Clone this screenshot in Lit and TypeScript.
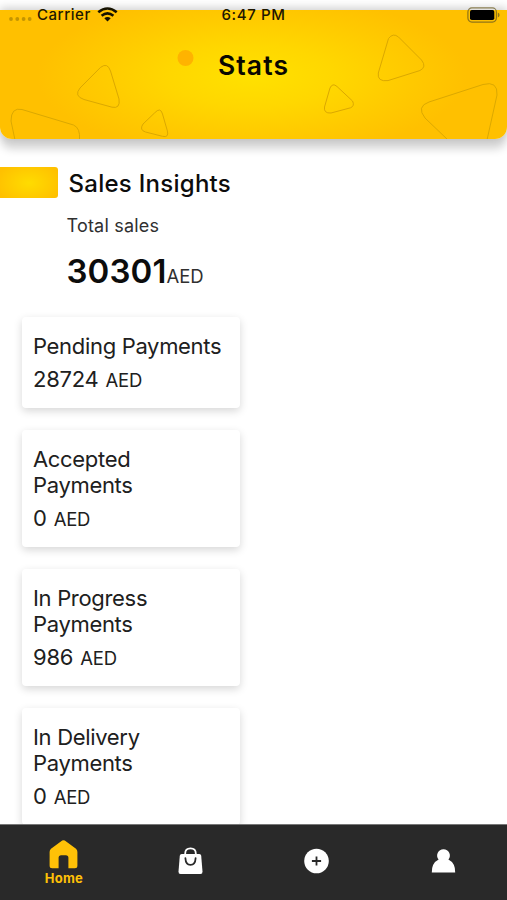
import { LitElement, html, svg, css } from "lit";
import { customElement, property } from "lit/decorators.js";

@customElement("status-bar")
class StatusBar extends LitElement {
  static styles = css`
    :host { display: grid; grid-template-columns: 1fr auto 1fr; height: 29px; padding: 0 7px 0 8px; align-items: center; font-size: 15px; font-weight: 500; line-height: 29px; color: #1c1600; }
    .left { display: flex; align-items: center; }
    .dots { margin-top: 9px; margin-right: 5px; }
    .carrier { letter-spacing: 0.55px; margin-right: 6px; }
    .time { letter-spacing: 0.6px; margin-right: 1px; }
    .battery { justify-self: end; }
    svg { display: block; }
  `;
  render() {
    return html`
      <div class="left">
        <svg class="dots" width="24" height="6" fill="#8a6a00" fill-opacity=".5">
          <circle cx="3" cy="3" r="1.9"/><circle cx="9.3" cy="3" r="1.9"/><circle cx="15.6" cy="3" r="1.9"/><circle cx="21.7" cy="3" r="1.9"/>
        </svg>
        <span class="carrier">Carrier</span>
        <svg width="21" height="15" viewBox="0 0 21 15" fill="none" stroke="#161200" stroke-width="2.6">
          <path d="M1.3 5.2Q10.5-2.2 19.7 5.2"/><path d="M4.6 8.8Q10.5 4 16.4 8.8"/>
          <path d="M7.3 11.3Q10.5 8.5 13.7 11.3L10.5 14.6Z" fill="#161200" stroke="none"/>
        </svg>
      </div>
      <span class="time">6:47 PM</span>
      <svg class="battery" width="33" height="16" viewBox="0 0 33 16">
        <rect x=".9" y=".9" width="28.5" height="14.2" rx="4" fill="none" stroke="#6b5b20" stroke-opacity=".75" stroke-width="1.2"/>
        <rect x="3" y="3" width="24.3" height="10" rx="1.8"/>
        <path d="M30.8 5.5Q32.6 6.2 32.6 8T30.8 10.5Z" fill="#6b5b20" fill-opacity=".75"/>
      </svg>`;
  }
}

@customElement("payment-card")
class PaymentCard extends LitElement {
  @property() label = "";
  @property() amount = "";
  static styles = css`
    :host { display: block; box-sizing: border-box; width: 218px; padding: 16px 11px 12px 11px; border-radius: 4px; background: #fff; box-shadow: 0 3px 8px rgba(0,0,0,.16); color: #202020; }
    .label { font-size: 22px; line-height: 26px; letter-spacing: -.32px; }
    .amount { display: flex; align-items: baseline; gap: 7px; margin-top: 3px; height: 34px; line-height: 34px; font-size: 22px; letter-spacing: -.25px; }
    .unit { font-size: 18.5px; letter-spacing: -.2px; }
  `;
  render() {
    return html`<div class="label">${this.label}</div>
      <div class="amount"><span>${this.amount}</span><span class="unit">AED</span></div>`;
  }
}

const shapes = [
  "M100.5 67.4Q107.5 62 110.5 71L119 99Q120.5 109 112 107.2L84 99.5Q73.5 96 80 88Z",
  "M154.5 113Q160.5 106.5 162.5 114L167.4 131Q169 138 162.5 136.3L145.5 132Q139 130 143 124Z",
  "M15 140L11 121Q11 107 22 109.5L73.5 125Q80.5 128 79.5 140",
  "M388.5 38.5Q393 32.5 398.5 37L421.5 60Q427 67 420 70.5L388 80.6Q377 82 378.3 73Z",
  "M330 88Q332.5 82.5 337 86.5L352.5 101Q355 106 350.5 107.8L331 113Q323.5 113.5 324.5 107Z",
  "M448 140L425 118Q416 106.5 429 102L483 84.5Q498 80.5 497 95L487 140",
];

const icons = [
  svg`<path d="M14.2.6Q15.5-.1 16.8.6L28 8.7Q29.4 10 29.4 12V25.7Q29.4 28.2 26.8 28.2H20.4V17.7Q20.4 15.2 17.9 15.2H13.1Q10.6 15.2 10.6 17.7V28.2H4.2Q1.6 28.2 1.6 25.7V12Q1.6 10 3 8.7Z"/>`,
  svg`<path d="M10.2 7.8V6.5Q10.2 1.4 15.5 1.4T20.8 6.5V7.8" fill="none" stroke="currentColor" stroke-width="1.8"/><path d="M6.7 7H24.3Q26 7 26.2 8.7L27.5 24.5Q27.6 27 25.5 27H5.5Q3.4 27 3.5 24.5L4.8 8.7Q5 7 6.7 7Z"/><path d="M10.4 11.2Q10.7 17.8 15.5 17.8T20.6 11.2" fill="none" stroke="#292929" stroke-width="1.8" stroke-linecap="round"/>`,
  svg`<circle cx="15.5" cy="14" r="12.3"/><path d="M10.9 14H20.1M15.5 9.4V18.6" stroke="#292929" stroke-width="1.8"/>`,
  svg`<path d="M15.5 2.2A6.3 6.3 0 0 1 20.4 12.5Q27.4 16 27.2 25.5H3.8Q3.6 16 10.6 12.5A6.3 6.3 0 0 1 15.5 2.2Z"/>`,
];

@customElement("app-root")
class AppRoot extends LitElement {
  static styles = css`
    :host { position: relative; display: flex; flex-direction: column; height: 900px; overflow: hidden; background: #fff; font-family: Inter, "Liberation Sans", sans-serif; color: #0c0c0c; }
    .header { position: relative; flex: none; height: 129px; margin-top: 10px; border-radius: 0 0 12px 12px; background: radial-gradient(ellipse 215px 82px at 252px 66px, #ffe100, #ffd700 38%, #ffca00 72%, #ffc000); box-shadow: 0 10px 8px rgba(0,0,0,.17), 0 -2px 10px rgba(0,0,0,.2); }
    .art { position: absolute; left: 0; top: -10px; }
    h1 { position: relative; margin: 0; padding-top: 37px; text-align: center; font-size: 26.5px; line-height: 37px; font-weight: 600; letter-spacing: 1.1px; color: #090700; }
    status-bar { position: absolute; left: 0; right: 0; top: 0; }
    .insights { display: flex; align-items: center; gap: 11px; margin-top: 28px; height: 31px; }
    .swatch { width: 57.5px; height: 31px; border-radius: 0 3px 3px 0; background: radial-gradient(ellipse 34px 22px at 29px 16px, #ffdc00, #ffc000); }
    h2 { margin: 0; font-size: 24px; font-weight: 500; line-height: 33px; height: 31px; letter-spacing: .27px; }
    .totals { padding-left: 66.5px; margin-top: 15px; height: 104px; }
    .caption { font-size: 18px; line-height: 25px; height: 24px; letter-spacing: .2px; color: #303030; }
    .total { display: flex; align-items: baseline; line-height: 40px; margin-top: 14px; }
    .value { font-size: 33px; font-weight: 600; letter-spacing: .1px; }
    .currency { font-size: 18.5px; letter-spacing: -.1px; color: #303030; }
    .cards { display: flex; flex-direction: column; gap: 22px; padding-left: 22px; }
    nav { position: absolute; left: 0; right: 0; bottom: 0; height: 75px; border-top: 1px solid #777; display: grid; grid-template-columns: repeat(4, 1fr); background: #292929; color: #fff; }
    .tab { display: flex; flex-direction: column; align-items: center; padding-top: 22px; font-size: 13px; line-height: 17px; font-weight: 700; }
    .active { padding: 15px 0 0 1px; color: #ffc107; letter-spacing: .3px; }
    .icon { display: block; fill: currentColor; overflow: visible; }
  `;
  render() {
    return html`
      <div class="header">
        <svg class="art" width="507" height="139" viewBox="0 0 507 139">
          <circle cx="185.5" cy="58" r="8" fill="#ffb300"/>
          ${shapes.map((d) => svg`<path d=${d} fill="none" stroke="#dba800" stroke-width="1"/>`)}
        </svg>
        <h1>Stats</h1>
      </div>
      <status-bar></status-bar>
      <div class="insights"><div class="swatch"></div><h2>Sales Insights</h2></div>
      <div class="totals">
        <div class="caption">Total sales</div>
        <div class="total"><span class="value">30301</span><span class="currency">AED</span></div>
      </div>
      <div class="cards">
        <payment-card label="Pending Payments" amount="28724"></payment-card>
        <payment-card label="Accepted Payments" amount="0"></payment-card>
        <payment-card label="In Progress Payments" amount="986"></payment-card>
        <payment-card label="In Delivery Payments" amount="0"></payment-card>
      </div>
      <nav>
        ${icons.map((icon, i) => html`<div class="tab ${i === 0 ? "active" : ""}">
          <svg class="icon" width="31" height="30" viewBox="0 0 31 30">${icon}</svg>${i === 0 ? "Home" : ""}
        </div>`)}
      </nav>`;
  }
}
